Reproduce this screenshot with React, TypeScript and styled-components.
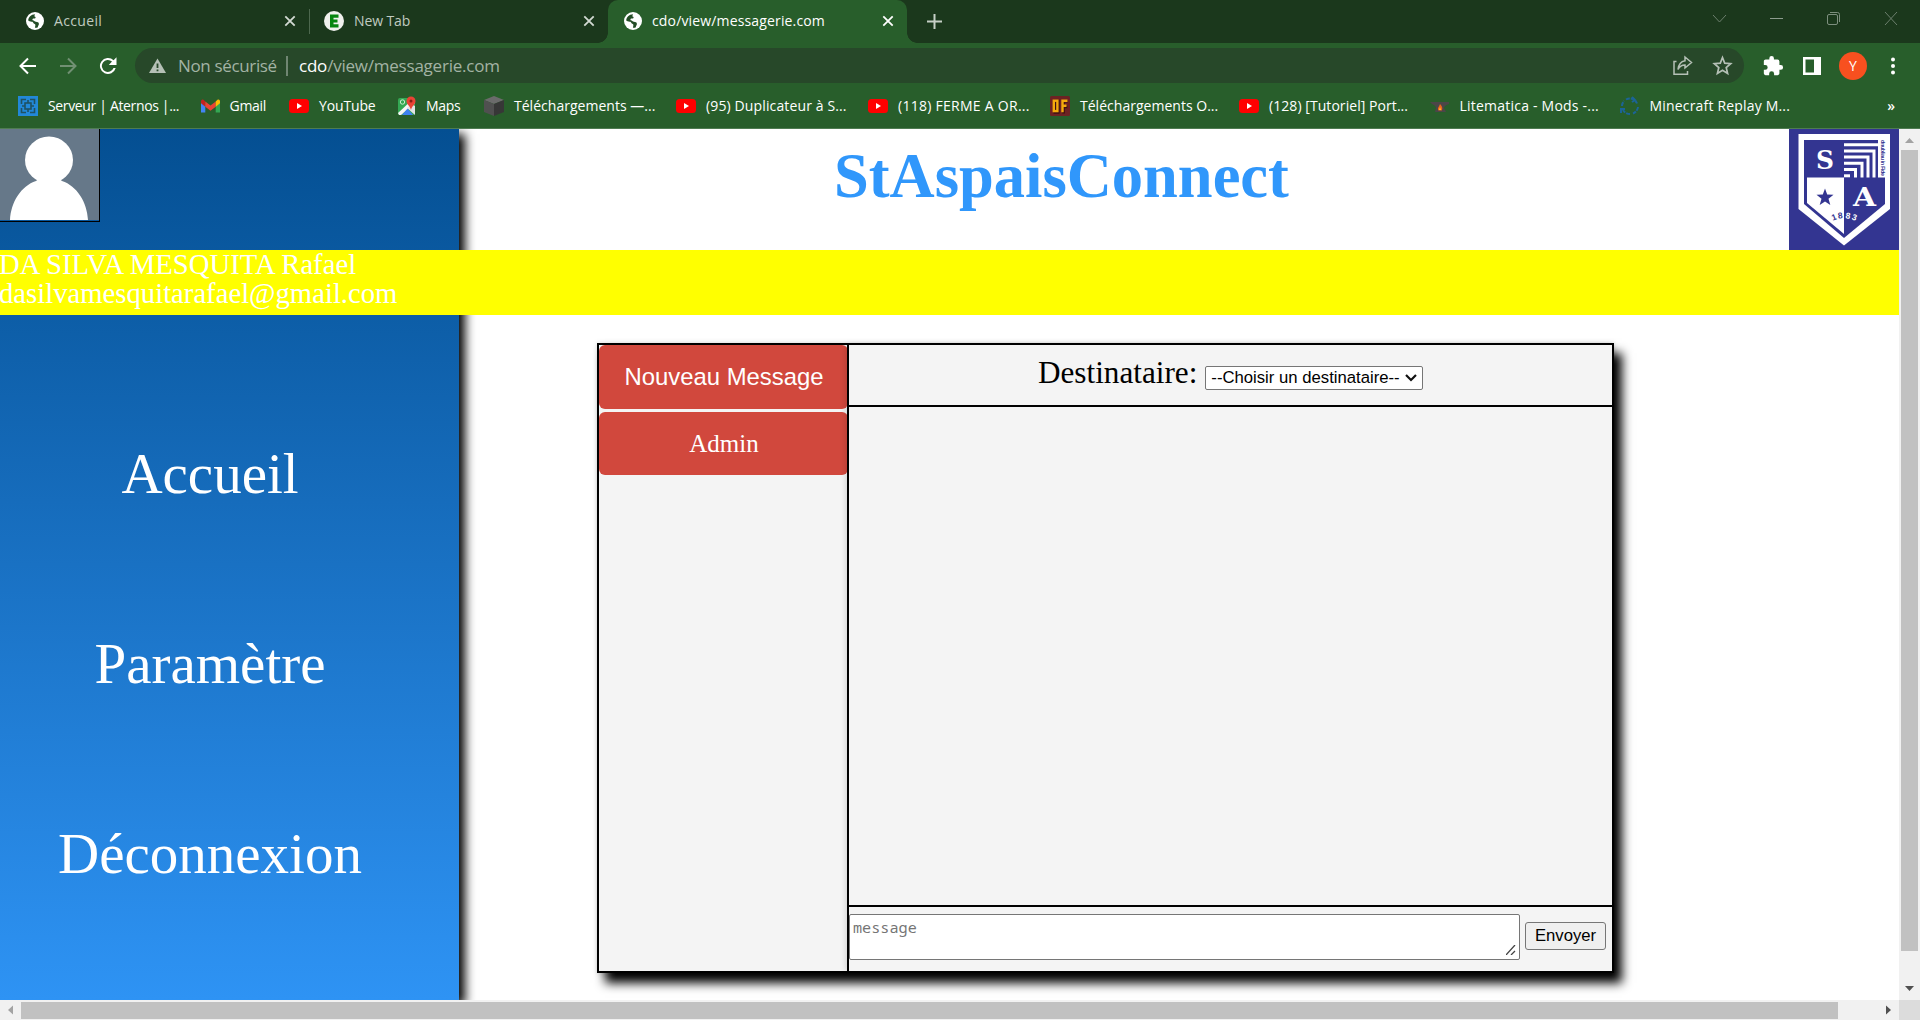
import React from "react";
import styled, { createGlobalStyle } from "styled-components";

const Global = createGlobalStyle`
  * { box-sizing: border-box; }
  html, body { margin: 0; padding: 0; overflow: hidden; background: #fff; }
`;
const ui = `"Open Sans", "Noto Sans", sans-serif`;
const serif = `"Liberation Serif", "Times New Roman", serif`;
const sans = `"Liberation Sans", Arial, sans-serif`;

const Window = styled.div`
  width: 1920px;
  height: 1020px;
  display: flex;
  flex-direction: column;
  overflow: hidden;
`;
const TabStrip = styled.div`
  height: 43px;
  flex: none;
  display: flex;
  background: #1b381c;
  color: #c6cfc6;
`;
const Tab = styled.div<{ $w: number; $left: number; $active?: boolean }>`
  position: relative;
  width: ${(p) => p.$w}px;
  height: 43px;
  display: flex;
  align-items: center;
  padding: 0 13px 2px ${(p) => p.$left}px;
  font: 14px ${ui};
  background: ${(p) => (p.$active ? "#285e2b" : "transparent")};
  color: ${(p) => (p.$active ? "#fff" : "#c0cbc0")};
  border-radius: 10px 10px 0 0;
  svg { flex: none; }
  &::before, &::after {
    content: "";
    display: ${(p) => (p.$active ? "block" : "none")};
    position: absolute;
    bottom: 0;
    width: 10px;
    height: 10px;
  }
  &::before { left: -10px; background: radial-gradient(circle at 0 0, transparent 9.5px, #285e2b 10px); }
  &::after { right: -10px; background: radial-gradient(circle at 100% 0, transparent 9.5px, #285e2b 10px); }
`;
const TabTitle = styled.span<{ $ls: number }>`
  flex: 1;
  margin-left: 10px;
  white-space: nowrap;
  letter-spacing: ${(p) => p.$ls}px;
`;
const TabDivider = styled.div`
  width: 1px;
  height: 25px;
  margin-top: 9px;
  background: #4d684e;
`;
const NewTab = styled.div`
  padding: 14px 0 0 20px;
  flex: 1;
`;
const WindowButtons = styled.div`
  display: flex;
  align-items: flex-start;
  gap: 39px;
  padding: 10px 20px 0 0;
`;
const Toolbar = styled.div`
  height: 45px;
  flex: none;
  display: flex;
  align-items: center;
  background: #285e2b;
  padding: 0 15px 0 16px;
`;
const NavButtons = styled.div`
  display: flex;
  gap: 16px;
  width: 119px;
`;
const Omnibox = styled.div`
  width: 1609px;
  height: 35px;
  border-radius: 18px;
  background: #274829;
  display: flex;
  align-items: center;
  padding: 0 11px 0 14px;
  font: 17px ${ui};
  color: #a3b3a4;
  b { font-weight: 400; color: #fff; }
`;
const Security = styled.span`
  margin-left: 12px;
  padding-right: 9px;
  border-right: 2px solid #708672;
  line-height: 20px;
  letter-spacing: -0.35px;
  width: 110px;
  white-space: nowrap;
`;
const Url = styled.span`
  flex: 1;
  margin-left: 11px;
  letter-spacing: -0.22px;
`;
const OmniActions = styled.div`
  display: flex;
  gap: 19px;
`;
const Extensions = styled.div`
  flex: 1;
  display: flex;
  align-items: center;
  gap: 18.5px;
  padding-left: 18px;
  svg { flex: none; }
`;
const Profile = styled.div`
  flex: none;
  width: 28px;
  height: 28px;
  border-radius: 50%;
  background: #f8501f;
  color: #fff;
  font: 14px/28px ${ui};
  text-align: center;
`;
const Bookmarks = styled.div`
  height: 41px;
  flex: none;
  display: flex;
  align-items: center;
  background: #285e2b;
  border-bottom: 1px solid #4f7c52;
  padding: 0 0 5px 18px;
  color: #fff;
  font: 14px ${ui};
`;
const Bookmark = styled.div<{ $w: number; $ls: number }>`
  display: flex;
  align-items: center;
  gap: 10px;
  width: ${(p) => p.$w}px;
  letter-spacing: ${(p) => p.$ls}px;
  white-space: nowrap;
  svg { flex: none; }
`;
const More = styled.div`
  flex: 1;
  text-align: right;
  padding-right: 25px;
  font-weight: 600;
`;

const Viewport = styled.div`
  flex: 1;
  display: grid;
  grid-template-columns: 1899px 21px;
  grid-template-rows: 871px 20px;
`;
const Page = styled.div`
  position: relative;
  overflow: hidden;
  display: grid;
  grid-template-columns: 459px 1fr;
  background: #fff;
`;
const Sidebar = styled.aside`
  background: linear-gradient(#044f92, #2e93f4);
  box-shadow: 6px 5px 10px #000;
  font-family: ${serif};
  color: #fff;
`;
const Avatar = styled.div`
  width: 100px;
  height: 93px;
  border-right: 1px solid #000;
  border-bottom: 1px solid #000;
  svg { display: block; }
`;
const Nav = styled.nav`
  display: flex;
  flex-direction: column;
  align-items: center;
  width: 420px;
  padding-top: 220px;
  gap: 126px;
  font-size: 57px;
  line-height: 64px;
`;
const Main = styled.main`
  display: flex;
  flex-direction: column;
`;
const Header = styled.header`
  display: flex;
  height: 121px;
  justify-content: flex-end;
`;
const Title = styled.h1`
  margin: 0;
  width: 454px;
  margin-right: 501px;
  padding-top: 10px;
  white-space: nowrap;
  font: bold 62.5px/74px ${serif};
  color: #3097fb;
`;
const Banner = styled.div`
  position: absolute;
  top: 121px;
  left: -1px;
  right: 0;
  height: 65px;
  background: #ff0;
  color: #fff;
  font: 28.7px/29px ${serif};
`;
const Card = styled.section`
  margin: 93px 0 0 138px;
  width: 1017px;
  height: 630px;
  border: 2px solid #000;
  background: #f4f4f4;
  box-shadow: 8px 10px 10px #000, 0 0 5px rgba(0, 0, 0, 0.15);
  display: grid;
  grid-template-columns: 248px 1fr;
`;
const Contacts = styled.div`
  display: flex;
  flex-direction: column;
  gap: 3px;
`;
const Contact = styled.button<{ $serif?: boolean; $h: number }>`
  height: ${(p) => p.$h}px;
  width: 249px;
  padding: 0 0 0 1px;
  border: 0;
  border-radius: 6px;
  background: #d1483d;
  color: #fff;
  font: ${(p) => (p.$serif ? `25px ${serif}` : `23.9px ${sans}`)};
`;
const Conversation = styled.div`
  border-left: 2px solid #000;
  box-shadow: -1px 0 6px rgba(0, 0, 0, 0.15);
  display: grid;
  grid-template-rows: 62px 500px 1fr;
  z-index: 1;
`;
const Recipient = styled.div`
  display: flex;
  border-bottom: 2px solid #000;
  padding: 9px 0 0 189px;
  font: 31.2px/38px ${serif};
  color: #000;
`;
const Select = styled.div`
  width: 218px;
  height: 24px;
  margin: 12px 0 0 8px;
  padding: 0 5px;
  border: 1px solid #767676;
  border-radius: 2px;
  background: #fff;
  display: flex;
  align-items: center;
  justify-content: space-between;
  font: 16.7px ${sans};
  white-space: nowrap;
`;
const Thread = styled.div`
  border-bottom: 2px solid #000;
`;
const Composer = styled.div`
  display: flex;
  padding-top: 7px;
  gap: 5px;
`;
const MessageBox = styled.div`
  width: 671px;
  height: 46px;
  border: 1px solid #767676;
  border-radius: 2px;
  background: #fff;
  color: #757575;
  padding: 3px 3px 4px;
  display: flex;
  justify-content: space-between;
  align-items: flex-end;
  font: 15.2px/18px "Noto Sans Mono", "DejaVu Sans Mono", monospace;
  span { align-self: flex-start; }
`;
const Send = styled.button`
  width: 81px;
  height: 28px;
  margin-top: 8px;
  padding: 0;
  border: 1px solid #767676;
  border-radius: 3px;
  background: #efefef;
  color: #000;
  font: 16.7px ${sans};
`;
const VScroll = styled.div`
  background: #f1f1f1;
  display: flex;
  flex-direction: column;
  align-items: center;
  justify-content: space-between;
  svg { display: block; flex: none; }
`;
const VThumb = styled.div`
  width: 17px;
  height: 801px;
  margin-bottom: 28px;
  background: #c1c1c1;
`;
const HScroll = styled.div`
  background: #f1f1f1;
  display: flex;
  align-items: center;
  svg { flex: none; }
`;
const HThumb = styled.div`
  width: 1817px;
  height: 17px;
  margin-right: 41px;
  background: #c1c1c1;
`;
const Corner = styled.div`
  background: #dcdcdc;
`;

const Globe = () => (
  <svg width="18" height="18" viewBox="0 0 18 18">
    <circle cx="9" cy="9" r="9" fill="#fff" />
    <path d="M9 2.2C5 2.3 2.3 5.2 2.2 8.6c1.900 1.400 3.200 1 4.200 1.200.900.300.700 1.900 2.300 2.100 1.200.100.600 2.200.200 3.900 1.300.100 2.300-.2 3-.6-.3-1.300.900-1.900 1-3.300 0-1.700-1.500-1.900-3-2.100-1.300-.2-1.900-1.400-3.100-1.500-.8-.2-.3-1.400.5-1.700 1.200-.3 1.900.1 2.300-.8.200-.9-.8-1.300-1.300-1.600z" fill="#244d27" />
  </svg>
);
const EIcon = () => (
  <svg width="20" height="20" viewBox="0 0 20 20">
    <circle cx="10" cy="10" r="10" fill="#f0f1ed" />
    <path d="M6 3.500h8.500v3.300H9.500v1.700h4v3h-4v1.700h5v3.300H6z" fill="#078510" />
  </svg>
);
const Close = ({ c }: { c: string }) => (
  <svg width="12" height="12" viewBox="0 0 12 12" stroke={c} strokeWidth="1.800">
    <path d="M1.300 1.300l9.400 9.400M10.700 1.300l-9.400 9.400" />
  </svg>
);
const YT = () => (
  <svg width="20" height="20" viewBox="0 0 20 20">
    <rect y="3" width="20" height="14" rx="3.500" fill="#f00" />
    <path d="M8 7l5 3-5 3z" fill="#fff" />
  </svg>
);
const Aternos = () => (
  <svg width="20" height="20" viewBox="0 0 20 20" fill="none" stroke="#1f5263" strokeWidth="1.600">
    <rect width="20" height="20" fill="#2288d8" stroke="none" />
    <path d="M3.500 8V3.500H8M12 3.500h4.500V8M16.500 12v4.500H12M8 16.500H3.500V12" />
    <rect x="7" y="7" width="6" height="6" />
    <path d="M10 4v3M10 13v3M4 10h3M13 10h3" />
  </svg>
);
const Gmail = () => (
  <svg width="19" height="20" viewBox="0 0 19 20">
    <path d="M0 5v11.500h4.300V8z" fill="#4285f4" />
    <path d="M19 5v11.500h-4.300V8z" fill="#34a853" />
    <path d="M0 5.500v1.700l4.300 3.500V5.500L2.500 3.800C1.200 3 0 4 0 5.500z" fill="#c5221f" />
    <path d="M4.300 5.500l5.200 4 5.200-4v5.200l-5.200 4-5.200-4z" fill="#ea4335" />
    <path d="M19 5.500v1.700l-4.300 3.500V5.500l1.800-1.700C17.800 3 19 4 19 5.500z" fill="#fbbc04" />
  </svg>
);
const MapsIcon = () => (
  <svg width="18" height="20" viewBox="0 0 18 20">
    <rect x="0" y="2" width="17" height="17" rx="2" fill="#34a853" />
    <path d="M0 17L15 3h2v4L3 19H1z" fill="#f6f6f6" />
    <path d="M9 12l8 7v-9l-4-2z" fill="#e2e3e5" />
    <path d="M4 19l5.500-6.500L15 19z" fill="#3e82f1" />
    <circle cx="4.500" cy="6" r="2.200" fill="none" stroke="#c9eecf" strokeWidth="1" />
    <path d="M13 .5a4.500 4.500 0 0 1 4.500 4.500c0 3.500-3.500 4.500-4.500 9-1-4.500-4.500-5.500-4.500-9A4.500 4.500 0 0 1 13 .5z" fill="#ea4335" />
    <circle cx="13" cy="5" r="1.500" fill="#8a1d15" />
  </svg>
);
const Cube = () => (
  <svg width="20" height="20" viewBox="0 0 20 20">
    <path d="M10 0l10 4-10 4L0 4z" fill="#6b6b6b" />
    <path d="M0 4l10 4v12L0 16z" fill="#505050" />
    <path d="M20 4L10 8v12l10-4z" fill="#373737" />
  </svg>
);
const OF = () => (
  <svg width="20" height="20" viewBox="0 0 20 20">
    <rect width="20" height="20" rx="1.500" fill="#6d2323" />
    <path d="M4 4h3.500v11.500H4zM17 4.200h-4.200V16.500M12.500 10h4" fill="none" stroke="#3d1212" strokeWidth="2.600" transform="translate(.8 1)" />
    <rect x="3.800" y="4.700" width="3.600" height="10.400" fill="none" stroke="#f4ab0c" strokeWidth="2.400" />
    <path d="M17.500 4.700h-5v11.600M12 9.800h4.500" fill="none" stroke="#f4ab0c" strokeWidth="2.400" />
  </svg>
);
const Anvil = () => (
  <svg width="20" height="20" viewBox="0 0 20 20">
    <path d="M0 6h19v2c-3 1-5 2-5 4l2 4H5l1-4C6 9 2 9 0 6z" fill="#4b4648" />
    <path d="M10 8c2 2 3 4 1.800 6.500H8.500C7 12 9 11 10 8z" fill="#e8641b" />
    <path d="M10 11l1 3H9z" fill="#fdc335" />
  </svg>
);
const Replay = () => (
  <svg width="20" height="20" viewBox="0 0 20 20" fill="none" stroke="#1c6496" strokeWidth="2">
    <path d="M6 3.500a7.500 7.500 0 0 1 11 4M18 11a8 8 0 0 1-5 6.500M10 18a8 8 0 0 1-7-4M2 10a8 8 0 0 1 2-5" strokeDasharray="4 1" />
    <path d="M1 17v-4h4M12 1l3 3-3 2" />
  </svg>
);

// icon, label, distance to the next bookmark, letter spacing
const marks: [React.ReactNode, string, number, number][] = [
  [<Aternos />, "Serveur | Aternos |...", 182.5, -0.35],
  [<Gmail />, "Gmail", 88.5, -0.3],
  [<YT />, "YouTube", 109, -0.15],
  [<MapsIcon />, "Maps", 86, -0.3],
  [<Cube />, "Téléchargements —...", 192, 0.02],
  [<YT />, "(95) Duplicateur à S...", 192, 0.13],
  [<YT />, "(118) FERME A OR...", 182, 0.27],
  [<OF />, "Téléchargements O...", 189, 0.02],
  [<YT />, "(128) [Tutoriel] Port...", 190.5, 0.06],
  [<Anvil />, "Litematica - Mods -...", 190, 0.22],
  [<Replay />, "Minecraft Replay M...", 180, 0.18],
];

const Person = () => (
  <svg width="99" height="92" viewBox="0 0 99 92">
    <rect width="99" height="91" fill="#667889" />
    <ellipse cx="49" cy="31" rx="24" ry="23.500" fill="#fff" />
    <path d="M10 91C11 73 21 57 36 52q2-1 1-2h24q-1 1 1 2c15 5 25 21 26 39z" fill="#fff" />
  </svg>
);

const Crest = () => (
  <svg width="110" height="121" viewBox="0 0 110 121">
    <rect width="110" height="121" fill="#333591" />
    <path d="M9.500 5H101v75L55 116.500 9.500 80z" fill="#fff" />
    <path d="M15 11h81v64L55 109 15 75z" fill="#333591" />
    <path d="M18 48.500h37V105L18 74z" fill="#fff" />
    <g fill="none" stroke="#fff" strokeWidth="3">
      <path d="M55 15.700h35" />
      <path d="M55 21.900h30V48.500" />
      <path d="M55 28.100h24V48.500" />
      <path d="M55 34.300h18V48.500" />
      <path d="M55 40.500h11.500V48.500" />
      <path d="M55 46.800h6" />
    </g>
    <rect x="89" y="11" width="7" height="37.500" fill="#fff" />
    <g fill="#fff" fontFamily="DejaVu Serif, serif" fontWeight="700" textAnchor="middle">
      <text x="36" y="39.500" fontSize="26" textLength="18" lengthAdjust="spacingAndGlyphs">S</text>
      <text x="75.500" y="77" fontSize="26" textLength="23" lengthAdjust="spacingAndGlyphs">A</text>
    </g>
    <text transform="translate(91.500 11) rotate(90)" fontSize="5.500" fontFamily="Liberation Sans, sans-serif" fontWeight="700" fill="#333591" textLength="36">dnubliau in Fide</text>
    <path d="M36 59.500l2.200 6 6.300.2-5 4 1.800 6.300-5.300-3.600-5.300 3.600 1.800-6.300-5-4 6.300-.2z" fill="#333591" />
    <g fontFamily="Liberation Sans, sans-serif" fontWeight="700" fontSize="8.500" textAnchor="middle">
      <text transform="translate(46 91) rotate(-20)" fill="#333591">1</text>
      <text transform="translate(51.500 89.500) rotate(-8)" fill="#333591">8</text>
      <text transform="translate(58.500 89.500) rotate(8)" fill="#fff">8</text>
      <text transform="translate(64.500 91) rotate(20)" fill="#fff">3</text>
    </g>
  </svg>
);

export default function App() {
  return (
    <Window>
      <Global />
      <TabStrip>
        <Tab $w={309} $left={26}>
          <Globe /><TabTitle $ls={0.35}>Accueil</TabTitle><Close c="#d3dad3" />
        </Tab>
        <TabDivider />
        <Tab $w={298} $left={14}>
          <EIcon /><TabTitle $ls={-0.1}>New Tab</TabTitle><Close c="#d3dad3" />
        </Tab>
        <Tab $w={299} $left={16} $active>
          <Globe /><TabTitle $ls={0.15}>cdo/view/messagerie.com</TabTitle><Close c="#fff" />
        </Tab>
        <NewTab>
          <svg width="15" height="15" viewBox="0 0 15 15" stroke="#c6cfc6" strokeWidth="2"><path d="M7.500 0v15M0 7.500h15" /></svg>
        </NewTab>
        <WindowButtons>
          <svg width="18" height="18" viewBox="0 0 18 18" fill="none" stroke="#6c7f6d"><path d="M2 5l6.500 7 6.500-7" /></svg>
          <svg width="18" height="18" viewBox="0 0 18 18" fill="none" stroke="#8d9c8e"><path d="M2 8.500h13" /></svg>
          <svg width="18" height="18" viewBox="0 0 18 18" fill="none" stroke="#7d8f7e"><rect x="2.500" y="4.500" width="10" height="10" rx="1.500" /><path d="M5 2.500h7.500a2 2 0 0 1 2 2V12" /></svg>
          <svg width="18" height="18" viewBox="0 0 18 18" fill="none" stroke="#6c7f6d"><path d="M3 2l12 13M15 2L3 15" /></svg>
        </WindowButtons>
      </TabStrip>
      <Toolbar>
        <NavButtons>
          <svg width="24" height="24" viewBox="0 0 24 24" fill="none" stroke="#fff" strokeWidth="2"><path d="M20 12H5M12 4.500L4.500 12l7.500 7.500" /></svg>
          <svg width="24" height="24" viewBox="0 0 24 24" fill="none" stroke="#719073" strokeWidth="2"><path d="M4 12h15M12 4.500l7.500 7.500-7.500 7.500" /></svg>
          <svg width="24" height="24" viewBox="0 0 24 24"><path d="M17.600 6.300A8 8 0 1 0 19.700 14h-2.200A6 6 0 1 1 16 7.600L12.800 11H20.500V3.300z" fill="#fff" /></svg>
        </NavButtons>
        <Omnibox>
          <svg width="17" height="17" viewBox="0 0 17 17"><path d="M8.500 1.500L17 16H0z" fill="#b5c0b6" /><path d="M8.500 6.500v4.500M8.500 12.500v1.800" stroke="#274829" strokeWidth="1.800" /></svg>
          <Security>Non sécurisé</Security>
          <Url><b>cdo</b>/view/messagerie.com</Url>
          <OmniActions>
            <svg width="21" height="21" viewBox="0 0 21 21" fill="none" stroke="#b5c0b6" strokeWidth="1.500"><path d="M4.500 6.500H2v12.700h13.500V16" /><path d="M13 2l6.500 5.500-6.500 5.500V10c-3.500 0-5.500 1.500-7 4.500.5-4.500 3-8 7-8.700z" /></svg>
            <svg width="21" height="21" viewBox="0 0 21 21" fill="none" stroke="#b5c0b6" strokeWidth="1.700"><path d="M10.500 2.500l2.200 5.600 6 .5-4.500 3.900 1.400 6-5.100-3.200-5.100 3.200 1.400-6-4.500-3.900 6-.5z" /></svg>
          </OmniActions>
        </Omnibox>
        <Extensions>
          <svg width="22" height="22" viewBox="0 0 24 24" fill="#fff"><path d="M20.500 11H19V7c0-1.100-.9-2-2-2h-4V3.500a2.500 2.500 0 0 0-5 0V5H4c-1.100 0-2 .9-2 2v3.800h1.500a2.700 2.700 0 0 1 0 5.400H2V20c0 1.100.9 2 2 2h3.800v-1.500a2.700 2.700 0 0 1 5.400 0V22H17c1.100 0 2-.9 2-2v-4h1.500a2.500 2.500 0 0 0 0-5z" /></svg>
          <svg width="18" height="18" viewBox="0 0 18 18"><path d="M0 0h18v18H0zM2.500 2.500v13h8.500v-13z" fill="#fff" fillRule="evenodd" /></svg>
          <Profile>Y</Profile>
          <svg width="14" height="22" viewBox="0 0 14 22" fill="#fff"><circle cx="7" cy="4.500" r="2" /><circle cx="7" cy="11" r="2" /><circle cx="7" cy="17.500" r="2" /></svg>
        </Extensions>
      </Toolbar>
      <Bookmarks>
        {marks.map(([icon, label, w, ls]) => (
          <Bookmark key={label} $w={w} $ls={ls}>{icon}{label}</Bookmark>
        ))}
        <More>»</More>
      </Bookmarks>
      <Viewport>
        <Page>
          <Sidebar>
            <Avatar><Person /></Avatar>
            <Nav><span>Accueil</span><span>Paramètre</span><span>Déconnexion</span></Nav>
          </Sidebar>
          <Main>
            <Header><Title>StAspaisConnect</Title><Crest /></Header>
            <Card>
              <Contacts>
                <Contact $h={64}>Nouveau Message</Contact>
                <Contact $h={63} $serif>Admin</Contact>
              </Contacts>
              <Conversation>
                <Recipient>
                  Destinataire:
                  <Select>
                    --Choisir un destinataire--
                    <svg width="12" height="8" viewBox="0 0 12 8" fill="none" stroke="#111" strokeWidth="2.200"><path d="M1 1l5 5 5-5" /></svg>
                  </Select>
                </Recipient>
                <Thread />
                <Composer>
                  <MessageBox>
                    <span>message</span>
                    <svg width="10" height="10" viewBox="0 0 10 10" stroke="#444" strokeWidth="1.300"><path d="M0 10L9 0M5 10l4-4" /></svg>
                  </MessageBox>
                  <Send>Envoyer</Send>
                </Composer>
              </Conversation>
            </Card>
          </Main>
          <Banner>DA SILVA MESQUITA Rafael<br />dasilvamesquitarafael@gmail.com</Banner>
        </Page>
        <VScroll>
          <svg width="21" height="21" viewBox="0 0 21 21"><path d="M6 14l4.500-5 4.500 5z" fill="#a3a3a3" /></svg>
          <VThumb />
          <svg width="21" height="21" viewBox="0 0 21 21"><path d="M6 7h9l-4.500 5z" fill="#505050" /></svg>
        </VScroll>
        <HScroll>
          <svg width="21" height="20" viewBox="0 0 21 20"><path d="M13 5.500v9L8 10z" fill="#a3a3a3" /></svg>
          <HThumb />
          <svg width="20" height="20" viewBox="0 0 20 20"><path d="M7 5.500v9l5-4.500z" fill="#505050" /></svg>
        </HScroll>
        <Corner />
      </Viewport>
    </Window>
  );
}
